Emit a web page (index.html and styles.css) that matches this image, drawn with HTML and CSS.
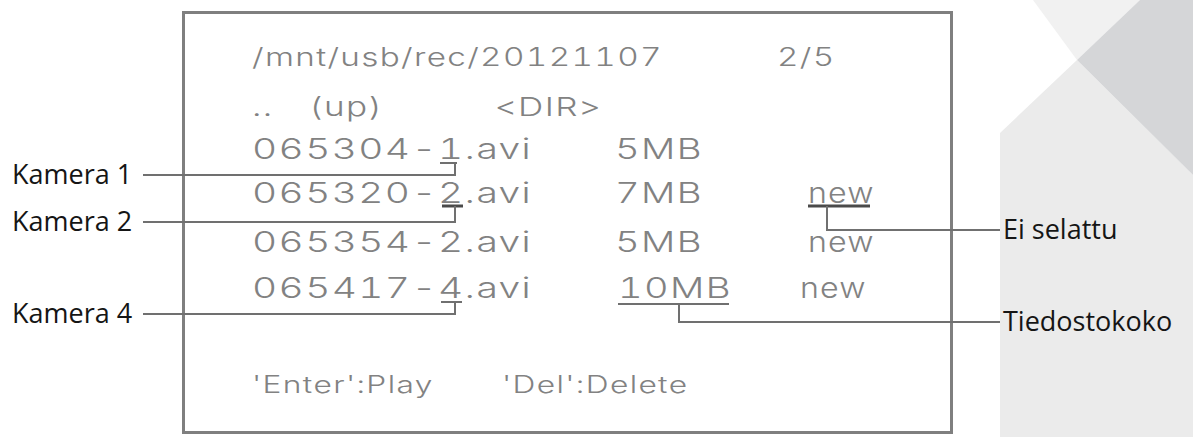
FILE: index.html
```html
<!DOCTYPE html>
<html lang="fi">
<head>
<meta charset="utf-8">
<title>Tallenteet</title>
<link rel="stylesheet" href="styles.css">
</head>
<body>
<div class="page">
  <svg class="decor" width="1193" height="437" viewBox="0 0 1193 437" aria-hidden="true">
    <polygon class="d-panel" points="1000,133 1077,60 1193,175 1193,437 1000,437"/>
    <polygon class="d-top" points="1033,0 1140,0 1077,60"/>
    <polygon class="d-diamond" points="1077,60 1140,0 1193,0 1193,175"/>
  </svg>

  <div class="labels labels-left">
    <div class="label l-k1">Kamera 1</div>
    <div class="label l-k2">Kamera 2</div>
    <div class="label l-k4">Kamera 4</div>
  </div>

  <div class="screen">
    <div class="row r-head">
      <span class="cell w-path">/mnt/usb/rec/20121107</span>
      <span class="cell">2/5</span>
    </div>
    <div class="row r-up">
      <span class="cell w-dots">..</span>
      <span class="cell w-upw">(up)</span>
      <span class="cell">&lt;DIR&gt;</span>
    </div>
    <div class="row r-file r-1">
      <span class="cell w-name">065304-1.avi</span>
      <span class="cell c-size w-size">5MB</span>
    </div>
    <div class="row r-file r-2">
      <span class="cell w-name">065320-2.avi</span>
      <span class="cell c-size w-size">7MB</span>
      <span class="cell c-new">new</span>
    </div>
    <div class="row r-file r-3">
      <span class="cell w-name">065354-2.avi</span>
      <span class="cell c-size w-size">5MB</span>
      <span class="cell c-new">new</span>
    </div>
    <div class="row r-file r-4">
      <span class="cell w-name4">065417-4.avi</span>
      <span class="cell c-size w-size4">10MB</span>
      <span class="cell c-new">new</span>
    </div>
    <div class="row r-foot">
      <span class="cell w-enter">'Enter':Play</span>
      <span class="cell">'Del':Delete</span>
    </div>
  </div>

  <div class="labels labels-right">
    <div class="label l-ei">Ei selattu</div>
    <div class="label l-tk">Tiedostokoko</div>
  </div>

  <svg class="leaders" width="1193" height="437" viewBox="0 0 1193 437" aria-hidden="true">
    <polyline class="ln" points="440,163 457,163"/>
    <polyline class="ln" points="143,175 455,175 455,163"/>
    <polyline class="ln ln-dark" points="442,206 463,206"/>
    <polyline class="ln" points="143,222 455,222 455,206"/>
    <polyline class="ln" points="441,302 462,302"/>
    <polyline class="ln" points="143,314 455,314 455,302"/>
    <polyline class="ln ln-dark" points="808,206 870,206"/>
    <polyline class="ln" points="827,206 827,230 1000,230"/>
    <polyline class="ln" points="618,304 729,304"/>
    <polyline class="ln" points="679,304 679,322 1000,322"/>
  </svg>
</div>
</body>
</html>
```

FILE: styles.css
```css
html, body {
  margin: 0;
  padding: 0;
  background: #ffffff;
}

.page {
  position: relative;
  display: flex;
  width: 1193px;
  height: 437px;
  overflow: hidden;
  background: #ffffff;
}

.decor {
  position: absolute;
  left: 0;
  top: 0;
  z-index: 0;
}
.d-panel { fill: #ebebeb; }
.d-top { fill: #f1f1f1; }
.d-diamond { fill: #d5d6d8; }

.leaders {
  position: absolute;
  left: 0;
  top: 0;
  z-index: 3;
  pointer-events: none;
}
.ln {
  fill: none;
  stroke: #707070;
  stroke-width: 2;
}
.ln-dark {
  stroke: #4a4a4a;
  stroke-width: 3;
}

.labels {
  position: relative;
  z-index: 1;
  box-sizing: border-box;
  display: flex;
  flex-direction: column;
  font-family: "Open Sans", "Noto Sans", sans-serif;
  font-size: 27px;
  line-height: 30px;
  color: #151515;
}
.labels-left {
  width: 182px;
  flex: none;
  padding: 159px 0 0 12px;
}
.labels-right {
  flex: 1;
  padding: 214px 0 0 50px;
}
.l-k2 { margin-top: 17px; }
.l-k4 { margin-top: 62px; }
.l-tk { margin-top: 62px; }

.screen {
  position: relative;
  z-index: 1;
  flex: none;
  box-sizing: border-box;
  width: 771px;
  height: 423px;
  margin-top: 11px;
  border: 3px solid #7f7f7f;
  background: #ffffff;
  padding: 28px 0 0 67px;
  display: flex;
  flex-direction: column;
  font-family: Inter, "DejaVu Sans", sans-serif;
  font-weight: 300;
  font-size: 26px;
  font-variant-numeric: tabular-nums;
  color: #828282;
}

.row {
  display: flex;
  height: 30px;
  line-height: 30px;
  white-space: nowrap;
}
.cell {
  flex: none;
  display: block;
  transform: scaleX(1.35);
  transform-origin: left center;
  letter-spacing: 1px;
}

.r-head .cell { transform: scaleX(1.33); }
.r-file { font-size: 28px; }
.r-file .cell { transform: scaleX(1.39); }
.r-file .c-size { transform: scaleX(1.36); }
.r-file .c-new { transform: scaleX(1.15); }

.r-head { font-size: 25px; }
.r-up { margin-top: 20px; }
.r-1 { margin-top: 12px; }
.r-2 { margin-top: 14px; }
.r-3 { margin-top: 19px; }
.r-4 { margin-top: 16px; }
.r-foot { margin-top: 67px; font-size: 23.5px; }

.w-path { width: 525px; }
.w-dots { width: 57px; }
.w-upw { width: 185px; }
.w-name { width: 363px; }
.w-size { width: 193px; }
.w-name4 { width: 366px; }
.w-size4 { width: 182px; }
.w-enter { width: 250px; }
```
